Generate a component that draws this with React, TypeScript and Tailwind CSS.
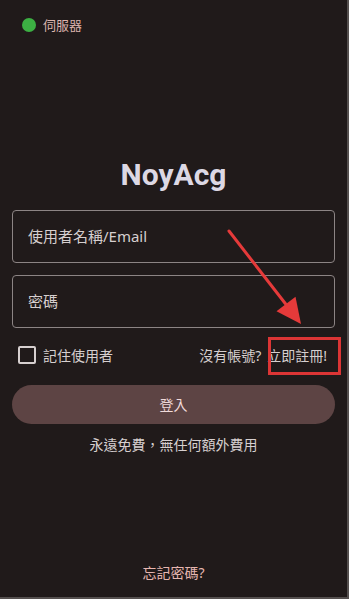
import React from "react";

export default function App() {
  const font = { fontFamily: '"Noto Sans", "Noto Sans CJK TC", sans-serif' };
  return (
    <div
      className="relative w-[349px] h-[599px] bg-[#201a1a] border-r-2 border-b-2 border-[#55504f] flex flex-col overflow-hidden"
      style={font}
    >
      <div className="flex items-center pt-[17px] pl-[22px] h-[33px]">
        <span className="w-[14px] h-[14px] rounded-full bg-[#3cb043]" />
        <span className="ml-[7px] text-[13px] leading-[16px] text-[#dcb4ae]">伺服器</span>
      </div>

      <div
        className="mt-[124px] text-center text-[30px] leading-[36px] font-bold text-[#dcd8e4]"
        style={{ fontFamily: 'Roboto, "Noto Sans", sans-serif' }}
      >
        NoyAcg
      </div>

      <div className="mt-[17px] mx-[12px] h-[53px] rounded-[4px] border border-[#8c8484] flex items-center pl-[15px]">
        <span className="text-[15px] text-[#d6cfcf]">使用者名稱/Email</span>
      </div>
      <div className="mt-[12px] mx-[12px] h-[53px] rounded-[4px] border border-[#8c8484] flex items-center pl-[15px]">
        <span className="text-[15px] text-[#d6cfcf]">密碼</span>
      </div>

      <div className="mt-[15px] h-[24px] flex items-center pl-[18px] pr-[20px]">
        <span className="w-[18px] h-[18px] rounded-[2px] border-2 border-[#d6cfcf]" />
        <span className="ml-[7px] text-[14px] text-[#d6cfcf]">記住使用者</span>
        <span className="ml-auto text-[14px] text-[#d6cfcf]">沒有帳號?</span>
        <span className="ml-[6px] text-[14px] text-[#d6cfcf]">立即註冊!</span>
      </div>

      <div className="mt-[18px] mx-[12px] h-[39px] rounded-full bg-[#5d4444] flex items-center justify-center">
        <span className="text-[14px] text-[#f0dada]">登入</span>
      </div>

      <div className="mt-[11px] text-center text-[14px] leading-[20px] text-[#d6cfcf]">
        永遠免費，無任何額外費用
      </div>

      <div className="mt-auto mb-[14px] text-center text-[14px] leading-[20px] text-[#e6b6b0]">
        忘記密碼?
      </div>

      <div className="absolute left-[268px] top-[337px] w-[73px] h-[38px] border-[3px] border-[#dc3535]" />

      <svg className="absolute left-0 top-0" width="349" height="599" viewBox="0 0 349 599">
        <line x1="229" y1="231" x2="288" y2="307" stroke="#e53a3a" strokeWidth="3" strokeLinecap="round" />
        <polygon points="301,324 276.5,311.3 295.5,296.7" fill="#e53a3a" />
      </svg>
    </div>
  );
}
